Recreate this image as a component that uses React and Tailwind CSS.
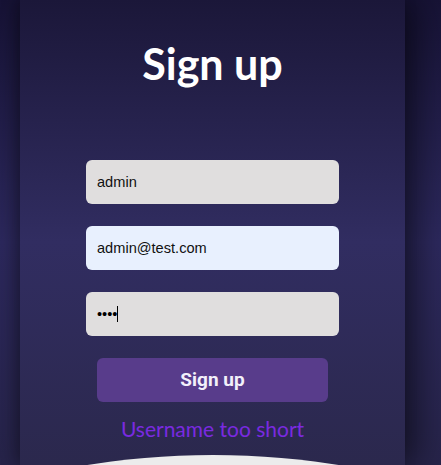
import React from 'react';

const App = () => {
  return (
    <div className="h-[465px] w-full overflow-hidden bg-[linear-gradient(to_bottom,#171336_0%,#2d295e_52%,#27244a_100%)] font-['Liberation_Sans',sans-serif]">
      <div className="ml-[20px] flex h-full w-[385px] flex-col items-center overflow-hidden bg-white/[0.02] shadow-[10px_0_34px_rgba(0,0,0,0.55),-4px_0_14px_rgba(0,0,0,0.25)]">
        <h1 className="mt-[42px] shrink-0 text-[43px] font-bold leading-none text-white font-['Lato',sans-serif]">
          Sign up
        </h1>

        <form className="mt-[75px] flex w-[253px] shrink-0 flex-col gap-[22px]">
          <input
            type="text"
            defaultValue="admin"
            className="h-[44px] w-full rounded-[6px] bg-[#e0dede] px-[11px] text-[14.6px] text-[#111] outline-none"
          />
          <input
            type="email"
            defaultValue="admin@test.com"
            className="h-[44px] w-full rounded-[6px] bg-[#e8f0fe] px-[11px] text-[14.6px] text-[#111] outline-none"
          />
          <div className="relative">
            <input
              type="password"
              defaultValue="test"
              readOnly
              className="h-[44px] w-full rounded-[6px] bg-[#e0dede] px-[11px] text-[14.6px] text-black caret-transparent outline-none"
            />
            <span className="absolute left-[31px] top-[14px] h-[16px] w-px bg-black" />
          </div>
        </form>

        <button
          type="button"
          className="mt-[22px] h-[44px] w-[231px] shrink-0 rounded-[6px] bg-[#583c8b] text-[19px] font-bold text-[#f3f0fa] font-['Roboto',sans-serif]"
        >
          Sign up
        </button>

        <p className="mt-[14px] shrink-0 text-[21px] leading-[26px] text-[#7a2ae0] font-['Lato',sans-serif]">
          Username too short
        </p>

        <div className="mt-[13px] h-[300px] w-[700px] shrink-0 rounded-[50%] bg-[#ececec]" />
      </div>
    </div>
  );
};

export default App;
